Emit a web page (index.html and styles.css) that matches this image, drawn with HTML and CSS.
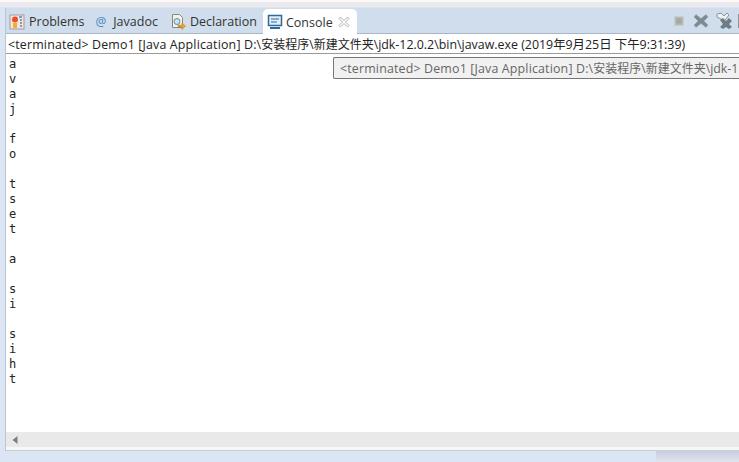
FILE: index.html
```html
<!DOCTYPE html>
<html lang="zh">
<head>
<meta charset="utf-8">
<title>Console</title>
<link rel="stylesheet" href="styles.css">
</head>
<body>
<div class="topstrip"></div>
<div class="view">
  <div class="tabbar">
    <div class="tab">
      <svg class="ico" viewBox="0 0 16 16"><rect x="1" y="1" width="14" height="14" fill="#efe6e2" stroke="#a89a9a"/><circle cx="6" cy="5.500" r="3" fill="#e8502a"/><rect x="4" y="9" width="4" height="5" fill="#f2b02e"/><path d="M10 3h3M11 6h2M11 9h2M11 12h2" stroke="#6a7fa8" stroke-width="1.500"/></svg>
      <span>Problems</span>
    </div>
    <div class="tab tab-at">
      <span class="at">@</span>
      <span>Javadoc</span>
    </div>
    <div class="tab tab-decl">
      <svg class="ico" viewBox="0 0 16 16"><path d="M2.500 .5h7l3 3v10h-10z" fill="#f6f2e6" stroke="#8c8878"/><circle cx="7" cy="7.500" r="3" fill="#cfe0ee" stroke="#5d8cb0"/><path d="M8 11h4V9l3.500 3-3.500 3.500V13H8z" fill="#eda531" stroke="#a87a26" stroke-width=".5"/></svg>
      <span>Declaration</span>
    </div>
    <div class="tab tab-active">
      <svg class="ico" viewBox="0 0 16 16"><rect x="1.500" y="1.500" width="13" height="10" fill="#e4eef8" stroke="#2f6a9c" stroke-width="1.500"/><path d="M4 5h8M4 8h6" stroke="#2f6a9c"/><path d="M3 14h10" stroke="#2f6a9c" stroke-width="2"/></svg>
      <span>Console</span>
      <svg class="close" viewBox="0 0 12 12"><path d="M2.500 1 6 4.500 9.500 1 11 2.500 7.500 6 11 9.500 9.500 11 6 7.500 2.500 11 1 9.500 4.500 6 1 2.500z" fill="#fff" stroke="#9a9a9a" stroke-width=".8"/></svg>
    </div>
    <div class="tools">
      <svg class="tool" viewBox="0 0 14 14"><rect x="1.500" y="1.500" width="11" height="11" fill="#b4b8b8" stroke="#cfd2d2"/><rect x="4" y="4" width="6" height="6" fill="#a4a8a6"/></svg>
      <svg class="tool tool-x" viewBox="0 0 16 16"><path d="M3 1.500 8 5.500 13 1.500 15 4 11 8 15 12 13 14.500 8 10.500 3 14.500 1 12 5 8 1 4z" fill="#7c8a94" stroke="#9aa4ac" stroke-width=".5"/></svg>
      <svg class="tool tool-xx" viewBox="0 0 18 18"><path d="M2 2 6 1 9 4 12 1 14 3 11 7 9 9 6 7 2 5z" fill="#eef0f0" stroke="#8a9298"/><path d="M5 8 8 6 11 9 14 6 17 9 14 12 17 15 14 17 11 15 8 17 5 15 8 12z" fill="#6e7c86"/></svg>
      <div class="tool-edge"></div>
    </div>
  </div>
  <div class="status"><span class="latin">&lt;terminated&gt; Demo1 [Java Application] D:\</span><span class="cjk">安装程序\新建文件夹\</span><span>jdk-12.0.2\bin\javaw.exe (2019年9月25日 下午9:31:39)</span></div>
  <div class="console">
    <div class="output">a
v
a
j

f
o

t
s
e
t

a

s
i

s
i
h
t</div>
    <div class="tooltip"><span class="latin">&lt;terminated&gt; Demo1 [Java Application] D:\</span><span class="cjk">安装程序\新建文件夹\</span><span>jdk-1</span></div>
  </div>
  <div class="hscroll"><svg class="arrow" viewBox="0 0 6 8"><path d="M5.500 0 .5 4l5 4z" fill="#7d7f86"/></svg></div>
  <div class="under"></div>
</div>
<div class="bottom"><div class="bottom-right"></div></div>
</body>
</html>
```
FILE: styles.css
```css
html, body {
  margin: 0;
  padding: 0;
  width: 739px;
  height: 462px;
  overflow: hidden;
}
body {
  background: #dce5f4;
  font-family: "Open Sans", "Noto Sans CJK SC", sans-serif;
  color: #222;
  display: flex;
  flex-direction: column;
}
.topstrip {
  height: 8px;
  flex: none;
  background: linear-gradient(#fdf9f9 0 2px, #eaeaee 2px 7px, #dfe4ec 7px);
}
.view {
  flex: none;
  margin-left: 5px;
  height: 443px;
  display: flex;
  flex-direction: column;
  background: #fff;
  border-left: 1px solid #b9c4d4;
  box-sizing: border-box;
}
.tabbar {
  height: 26px;
  flex: none;
  background: #cfdded;
  border-bottom: 1px solid #a9b6c6;
  display: flex;
  align-items: center;
  font-size: 12.500px;
  color: #333;
  box-sizing: border-box;
}
.tab {
  display: flex;
  align-items: center;
  height: 25px;
  padding: 2px 4px 0 3px;
  gap: 4px;
  white-space: nowrap;
  box-sizing: border-box;
}
.tab-at {
  padding-left: 7px;
  gap: 7px;
}
.tab-decl {
  padding-left: 8px;
  gap: 4px;
}
.tab-active {
  background: #fff;
  margin: 1px 0 -1px 2px;
  padding: 1px 7px 0 4px;
  border-radius: 5px 5px 0 0;
  gap: 3px;
  height: 26px;
}
.ico {
  width: 16px;
  height: 16px;
  flex: none;
}
.close {
  width: 12px;
  height: 12px;
  margin-left: 2px;
  flex: none;
}
.at {
  color: #4a86b8;
  font-size: 12px;
}
.tools {
  margin-left: auto;
  display: flex;
  align-items: center;
  padding-right: 0;
}
.tool {
  width: 12px;
  height: 12px;
  flex: none;
}
.tool-x {
  width: 16px;
  height: 16px;
  margin-left: 8px;
}
.tool-xx {
  width: 18px;
  height: 18px;
  margin-left: 6px;
}
.tool-edge {
  width: 1px;
  height: 14px;
  background: #8a929c;
  margin-left: 5px;
}
.status {
  height: 20px;
  flex: none;
  font-size: 12.400px;
  line-height: 22px;
  padding-left: 2px;
  border-bottom: 1px solid #9a9a9a;
  box-sizing: border-box;
  white-space: nowrap;
  overflow: hidden;
}
.latin {
  letter-spacing: .17px;
}
.cjk {
  font-size: 12px;
}
.console {
  position: relative;
  flex: 1;
  overflow: hidden;
}
.output {
  margin: 0;
  padding: 3px 0 0 3px;
  font-family: "DejaVu Sans Mono", monospace;
  font-size: 12px;
  line-height: 15px;
  white-space: pre;
  color: #222;
}
.tooltip {
  position: absolute;
  left: 327px;
  top: 3px;
  height: 22px;
  right: 0;
  box-sizing: border-box;
  background: #f1f1f1;
  border: 1px solid #767676;
  border-right: 0;
  border-radius: 2px 0 0 2px;
  color: #666;
  font-size: 12.400px;
  line-height: 22px;
  padding-left: 6px;
  white-space: nowrap;
}
.hscroll {
  height: 15px;
  flex: none;
  background: #e9e9e9;
  display: flex;
  align-items: center;
}
.arrow {
  width: 6px;
  height: 8px;
  margin-left: 6px;
}
.under {
  height: 3px;
  flex: none;
  background: #f6f8f6;
  border-bottom: 1px solid #c6ced8;
}
.bottom {
  flex: 1;
  display: flex;
  justify-content: flex-end;
}
.bottom-right {
  width: 83px;
  background: linear-gradient(#c8cede, #e0e4f0);
}
```
